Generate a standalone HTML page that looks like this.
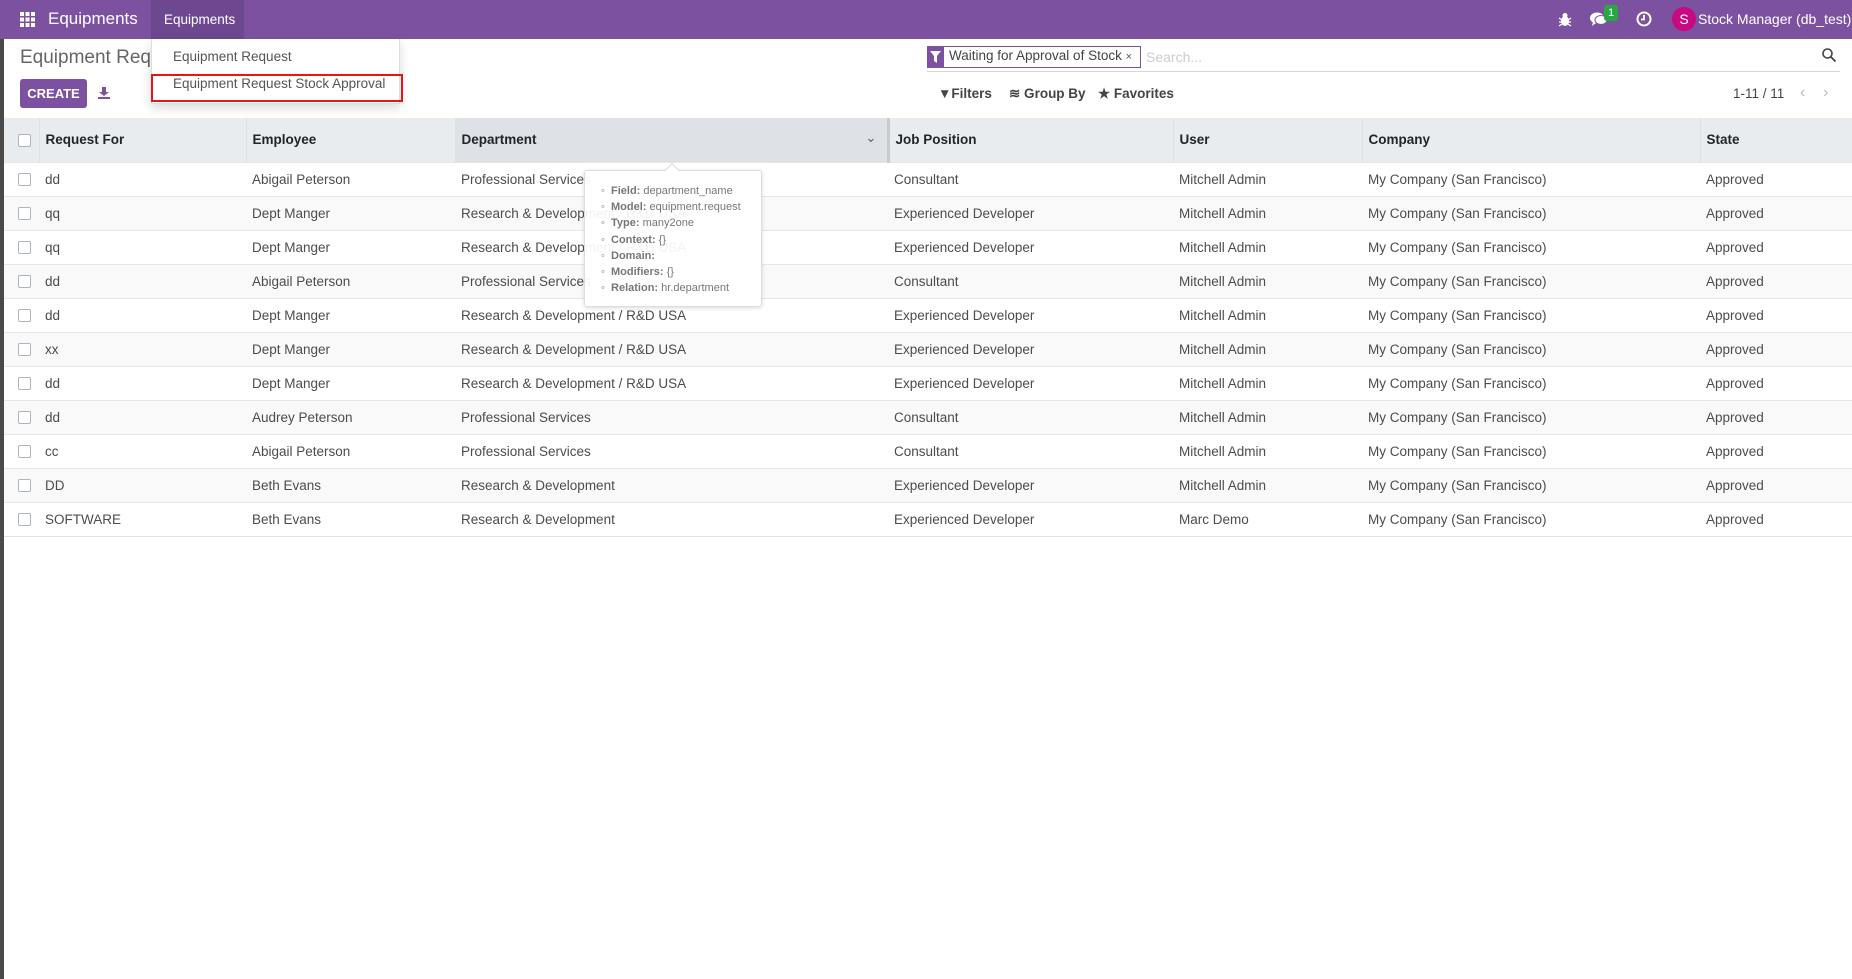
<!DOCTYPE html>
<html><head><meta charset="utf-8"><style>
*{box-sizing:border-box;margin:0;padding:0}
body{width:1852px;height:979px;overflow:hidden;background:#fff;font-family:"Liberation Sans",sans-serif;font-size:14px;color:#4c4c4c;position:relative}
.abs{position:absolute}
.nav{left:0;top:0;width:1852px;height:39px;background:#7c52a0;color:#fff}
.strip{left:0;top:39px;width:4px;height:940px;background:#4a4a4a}
table{position:absolute;left:4px;top:118px;border-collapse:collapse;width:1848px;table-layout:fixed}
th{height:44px;background:#e9ecef;text-align:left;font-weight:bold;color:#212529;font-size:13.5px;border-left:1px solid #dee2e6;padding-left:6px}
td{height:34px;border-top:1px solid #e6e6e6;padding-left:6px;color:#4c4c4c;font-size:13.5px;white-space:nowrap;overflow:visible}
tr:nth-child(even) td{background:#f9f9f9}
tbody tr:last-child td{border-bottom:1px solid #dee2e6}
.cb{display:inline-block;width:13px;height:13px;border:1px solid #adb5bd;border-radius:2px;background:#fff;vertical-align:middle}
</style></head><body>
<div class="abs nav">
 <svg class="abs" style="left:20px;top:12px" width="15" height="15"><g fill="#fff"><rect x="0" y="0" width="4" height="4"/><rect x="5.5" y="0" width="4" height="4"/><rect x="11" y="0" width="4" height="4"/><rect x="0" y="5.5" width="4" height="4"/><rect x="5.5" y="5.5" width="4" height="4"/><rect x="11" y="5.5" width="4" height="4"/><rect x="0" y="11" width="4" height="4"/><rect x="5.5" y="11" width="4" height="4"/><rect x="11" y="11" width="4" height="4"/></g></svg>
 <div class="abs" style="left:48px;top:9px;font-size:17px">Equipments</div>
 <div class="abs" style="left:151px;top:0;width:93px;height:39px;background:#6d4890"></div>
 <div class="abs" style="left:164px;top:12px;font-size:13.5px">Equipments</div>
 <svg class="abs" style="left:1558px;top:12px" width="14" height="15" viewBox="0 0 14 15"><ellipse cx="7" cy="9" rx="4" ry="5" fill="#fff"/><circle cx="7" cy="3.5" r="2.5" fill="#fff"/><path d="M1 6l3 2M13 6l-3 2M1 10h3M13 10h-3M1 14l3-2M13 14l-3-2" stroke="#fff" stroke-width="1.3"/></svg>
 <svg class="abs" style="left:1590px;top:11px" width="18" height="16" viewBox="0 0 18 16"><ellipse cx="7" cy="7" rx="7" ry="5.5" fill="#fff"/><path d="M3 11l-1 4 4-3z" fill="#fff"/><ellipse cx="11" cy="9" rx="6" ry="4.5" fill="#fff" stroke="#7c52a0" stroke-width="1"/></svg>
 <div class="abs" style="left:1604px;top:5px;width:14px;height:16px;background:#28a745;border-radius:3px;font-size:11px;text-align:center;line-height:16px">1</div>
 <svg class="abs" style="left:1636px;top:11px" width="16" height="16" viewBox="0 0 16 16"><circle cx="8" cy="8" r="6.5" fill="none" stroke="#fff" stroke-width="2"/><path d="M8 4v4.5h-3" fill="none" stroke="#fff" stroke-width="1.8"/></svg>
 <div class="abs" style="left:1672px;top:7px;width:24px;height:24px;border-radius:50%;background:#c8097f;text-align:center;line-height:24px;font-size:14px">S</div>
 <div class="abs" style="left:1698px;top:11px;font-size:14px">Stock Manager (db_test)</div>
</div>
<div class="abs strip"></div>
<div class="abs" style="left:20px;top:47px;font-size:19px;color:#666">Equipment Requ</div>
<div class="abs" style="left:20px;top:79px;width:67px;height:29px;background:#7c52a0;border-radius:3px;color:#fff;font-weight:bold;font-size:13px;text-align:center;line-height:29px">CREATE</div>
<svg class="abs" style="left:98px;top:87px" width="12" height="12" viewBox="0 0 12 12"><path d="M4 0h4v5h3l-5 4-5-4h3z" fill="#7c52a0"/><rect x="0" y="10" width="12" height="2" fill="#7c52a0"/></svg>
<!-- search -->
<div class="abs" style="left:927px;top:46px;width:214px;height:22px;border:1px solid #7c52a0;background:#fff"></div>
<div class="abs" style="left:927px;top:46px;width:17px;height:22px;background:#7c52a0"></div>
<svg class="abs" style="left:930px;top:51px" width="11" height="12" viewBox="0 0 11 12"><path d="M0 0h11l-4 5v7l-3-2V5z" fill="#fff"/></svg>
<div class="abs" style="left:949px;top:48px;font-size:13.5px;color:#444">Waiting for Approval of Stock <span style="font-size:11px;color:#555">×</span></div>
<div class="abs" style="left:1146px;top:49px;font-size:14px;color:#ccc">Search...</div>
<div class="abs" style="left:927px;top:71px;width:913px;height:1px;background:#d6d6d6"></div>
<svg class="abs" style="left:1822px;top:48px" width="14" height="14" viewBox="0 0 14 14"><circle cx="5.5" cy="5.5" r="4.5" fill="none" stroke="#444" stroke-width="1.6"/><path d="M9 9l4.5 4.5" stroke="#444" stroke-width="1.8"/></svg>
<div class="abs" style="left:938px;top:86px;font-size:13.5px;color:#444;font-weight:bold">▼Filters</div>
<div class="abs" style="left:1009px;top:86px;font-size:13.5px;color:#444;font-weight:bold">≋ Group By</div>
<div class="abs" style="left:1098px;top:86px;font-size:13.5px;color:#444;font-weight:bold">★ Favorites</div>
<div class="abs" style="left:1733px;top:86px;font-size:13.5px;color:#444">1-11 / 11</div>
<div class="abs" style="left:1800px;top:84px;font-size:16px;color:#bbb">‹&nbsp;&nbsp;&nbsp;&nbsp;›</div>
<table>
<colgroup><col style="width:35px"><col style="width:207px"><col style="width:209px"><col style="width:433px"><col style="width:285px"><col style="width:189px"><col style="width:338px"><col style="width:152px"></colgroup>
<thead><tr><th style="border-left:none;padding-left:14px"><span class="cb"></span></th><th>Request For</th><th>Employee</th><th style="background:#dee2e6;border-right:3px solid #c8ccd0;position:relative">Department<span style="position:absolute;right:10px;top:12px;font-weight:normal;color:#666">⌄</span></th><th>Job Position</th><th>User</th><th>Company</th><th>State</th></tr></thead>
<tbody>
<tr><td style="padding-left:14px"><span class="cb"></span></td><td>dd</td><td>Abigail Peterson</td><td>Professional Services</td><td>Consultant</td><td>Mitchell Admin</td><td>My Company (San Francisco)</td><td>Approved</td></tr>
<tr><td style="padding-left:14px"><span class="cb"></span></td><td>qq</td><td>Dept Manger</td><td>Research &amp; Development / R&amp;D USA</td><td>Experienced Developer</td><td>Mitchell Admin</td><td>My Company (San Francisco)</td><td>Approved</td></tr>
<tr><td style="padding-left:14px"><span class="cb"></span></td><td>qq</td><td>Dept Manger</td><td>Research &amp; Development / R&amp;D USA</td><td>Experienced Developer</td><td>Mitchell Admin</td><td>My Company (San Francisco)</td><td>Approved</td></tr>
<tr><td style="padding-left:14px"><span class="cb"></span></td><td>dd</td><td>Abigail Peterson</td><td>Professional Services</td><td>Consultant</td><td>Mitchell Admin</td><td>My Company (San Francisco)</td><td>Approved</td></tr>
<tr><td style="padding-left:14px"><span class="cb"></span></td><td>dd</td><td>Dept Manger</td><td>Research &amp; Development / R&amp;D USA</td><td>Experienced Developer</td><td>Mitchell Admin</td><td>My Company (San Francisco)</td><td>Approved</td></tr>
<tr><td style="padding-left:14px"><span class="cb"></span></td><td>xx</td><td>Dept Manger</td><td>Research &amp; Development / R&amp;D USA</td><td>Experienced Developer</td><td>Mitchell Admin</td><td>My Company (San Francisco)</td><td>Approved</td></tr>
<tr><td style="padding-left:14px"><span class="cb"></span></td><td>dd</td><td>Dept Manger</td><td>Research &amp; Development / R&amp;D USA</td><td>Experienced Developer</td><td>Mitchell Admin</td><td>My Company (San Francisco)</td><td>Approved</td></tr>
<tr><td style="padding-left:14px"><span class="cb"></span></td><td>dd</td><td>Audrey Peterson</td><td>Professional Services</td><td>Consultant</td><td>Mitchell Admin</td><td>My Company (San Francisco)</td><td>Approved</td></tr>
<tr><td style="padding-left:14px"><span class="cb"></span></td><td>cc</td><td>Abigail Peterson</td><td>Professional Services</td><td>Consultant</td><td>Mitchell Admin</td><td>My Company (San Francisco)</td><td>Approved</td></tr>
<tr><td style="padding-left:14px"><span class="cb"></span></td><td>DD</td><td>Beth Evans</td><td>Research &amp; Development</td><td>Experienced Developer</td><td>Mitchell Admin</td><td>My Company (San Francisco)</td><td>Approved</td></tr>
<tr><td style="padding-left:14px"><span class="cb"></span></td><td>SOFTWARE</td><td>Beth Evans</td><td>Research &amp; Development</td><td>Experienced Developer</td><td>Marc Demo</td><td>My Company (San Francisco)</td><td>Approved</td></tr>
</tbody></table>
<!-- tooltip -->
<div class="abs" style="left:584px;top:170px;width:178px;height:137px;background:rgba(255,255,255,0.93);border:1px solid #ddd;border-radius:3px;box-shadow:0 1px 4px rgba(0,0,0,.15);font-size:11px;color:#777;padding:12px 0 0 16px;line-height:16.2px">
<div>◦&nbsp;&nbsp;<b>Field:</b> department_name</div>
<div>◦&nbsp;&nbsp;<b>Model:</b> equipment.request</div>
<div>◦&nbsp;&nbsp;<b>Type:</b> many2one</div>
<div>◦&nbsp;&nbsp;<b>Context:</b> {}</div>
<div>◦&nbsp;&nbsp;<b>Domain:</b></div>
<div>◦&nbsp;&nbsp;<b>Modifiers:</b> {}</div>
<div>◦&nbsp;&nbsp;<b>Relation:</b> hr.department</div>
</div>
<div class="abs" style="left:667px;top:165px;width:10px;height:10px;background:#fff;border-left:1px solid #ddd;border-top:1px solid #ddd;transform:rotate(45deg)"></div>
<!-- dropdown -->
<div class="abs" style="left:151px;top:39px;width:249px;height:65px;background:#fff;border:1px solid #ddd;border-top:none;box-shadow:0 4px 10px rgba(0,0,0,.15)"></div>
<div class="abs" style="left:173px;top:49px;font-size:13.5px;color:#555">Equipment Request</div>
<div class="abs" style="left:151px;top:74px;width:252px;height:28px;border:2px solid #e8141b"></div>
<div class="abs" style="left:173px;top:76px;font-size:13.5px;color:#555">Equipment Request Stock Approval</div>
</body></html>
